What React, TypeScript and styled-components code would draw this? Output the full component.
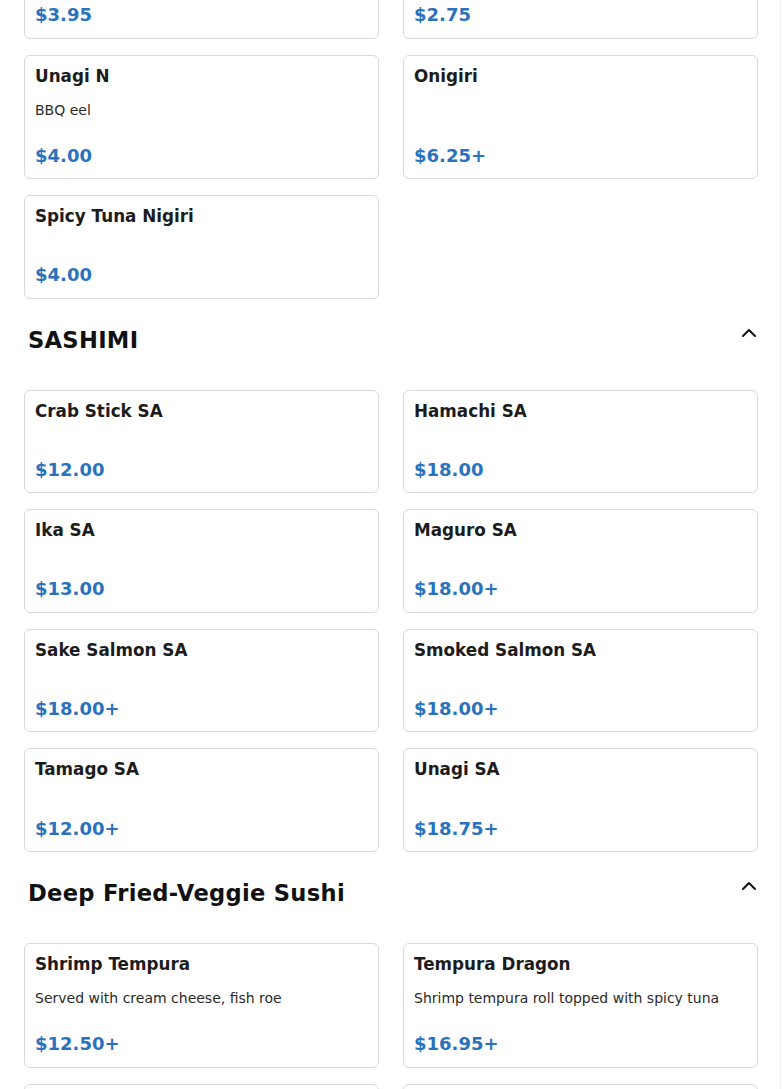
import styled, { createGlobalStyle } from "styled-components";
import { ChevronUp } from "lucide-react";

type Item = {
  name: string;
  price: string;
  description?: string;
};

type Section = {
  title?: string;
  items: Item[];
};

const sections: Section[] = [
  {
    items: [
      { name: "Tobiko N", price: "$3.95" },
      { name: "Tamago N", price: "$2.75" },
      { name: "Unagi N", price: "$4.00", description: "BBQ eel" },
      { name: "Onigiri", price: "$6.25+" },
      { name: "Spicy Tuna Nigiri", price: "$4.00" },
    ],
  },
  {
    title: "SASHIMI",
    items: [
      { name: "Crab Stick SA", price: "$12.00" },
      { name: "Hamachi SA", price: "$18.00" },
      { name: "Ika SA", price: "$13.00" },
      { name: "Maguro SA", price: "$18.00+" },
      { name: "Sake Salmon SA", price: "$18.00+" },
      { name: "Smoked Salmon SA", price: "$18.00+" },
      { name: "Tamago SA", price: "$12.00+" },
      { name: "Unagi SA", price: "$18.75+" },
    ],
  },
  {
    title: "Deep Fried-Veggie Sushi",
    items: [
      {
        name: "Shrimp Tempura",
        price: "$12.50+",
        description: "Served with cream cheese, fish roe",
      },
      {
        name: "Tempura Dragon",
        price: "$16.95+",
        description: "Shrimp tempura roll topped with spicy tuna",
      },
      {
        name: "Crunchy Roll",
        price: "$11.95+",
        description: "Shrimp tempura, crab stick, crunch flakes",
      },
      {
        name: "Veggie Tempura",
        price: "$9.95+",
        description: "Sweet potato, broccoli, carrot",
      },
    ],
  },
];

const App = () => {
  return (
    <>
      <GlobalStyle />
      <Page>
        {/* list is shown scrolled down part way */}
        <Menu $scrolled={65}>
          {sections.map((section, i) => (
            <SectionBlock key={i}>
              {section.title && (
                <SectionHeader>
                  <SectionTitle>{section.title}</SectionTitle>
                  <Toggle aria-label="Collapse section">
                    <ChevronUp size={24} strokeWidth={2} />
                  </Toggle>
                </SectionHeader>
              )}
              <Grid>
                {section.items.map((item) => (
                  <Card key={item.name}>
                    <ItemName>{item.name}</ItemName>
                    {item.description && <Description>{item.description}</Description>}
                    <Price>{item.price}</Price>
                  </Card>
                ))}
              </Grid>
            </SectionBlock>
          ))}
        </Menu>
      </Page>
    </>
  );
};

export default App;

const GlobalStyle = createGlobalStyle`
  * {
    box-sizing: border-box;
  }

  html,
  body {
    margin: 0;
    padding: 0;
    background: #ffffff;
    overflow: hidden;
  }

  body {
    font-family: "DejaVu Sans", Verdana, sans-serif;
    color: #1a1a1a;
  }
`;

const Page = styled.main`
  width: 781px;
  height: 1089px;
  overflow: hidden;
  padding: 0 22px 0 24px;
  border-right: 1px solid #efefef;
`;

const Menu = styled.div<{ $scrolled: number }>`
  margin-top: ${({ $scrolled }) => -$scrolled}px;
  display: flex;
  flex-direction: column;
`;

const SectionBlock = styled.section`
  display: flex;
  flex-direction: column;
`;

const SectionHeader = styled.div`
  display: flex;
  justify-content: space-between;
  align-items: flex-start;
  margin: 22px 0 36px;
  padding-left: 4px;
`;

const SectionTitle = styled.h2`
  margin: 0;
  padding-top: 6px;
  font-size: 22.6px;
  line-height: 1.2;
  font-weight: 700;
  letter-spacing: 0.3px;
  color: #111111;
`;

const Toggle = styled.button`
  display: flex;
  align-items: center;
  justify-content: center;
  width: 24px;
  height: 24px;
  margin-right: -3px;
  padding: 0;
  border: none;
  background: transparent;
  color: #111111;
  cursor: pointer;
`;

const Grid = styled.div`
  display: grid;
  grid-template-columns: 1fr 1fr;
  column-gap: 24px;
  row-gap: 16px;
`;

const Card = styled.article`
  display: flex;
  flex-direction: column;
  padding: 10px;
  border: 1px solid #d9d9d9;
  border-radius: 6px;
  background: #ffffff;
`;

const ItemName = styled.h3`
  margin: 0 0 14px;
  font-size: 16.8px;
  line-height: 1.2;
  font-weight: 700;
  color: #1c1c1c;
`;

const Description = styled.p`
  margin: 0;
  font-size: 14px;
  line-height: 1.5;
  color: #2a2a2a;
`;

const Price = styled.span`
  margin-top: auto;
  padding: 23px 0 1px;
  font-size: 18px;
  line-height: 1.3;
  font-weight: 700;
  color: #2b72bd;
`;
